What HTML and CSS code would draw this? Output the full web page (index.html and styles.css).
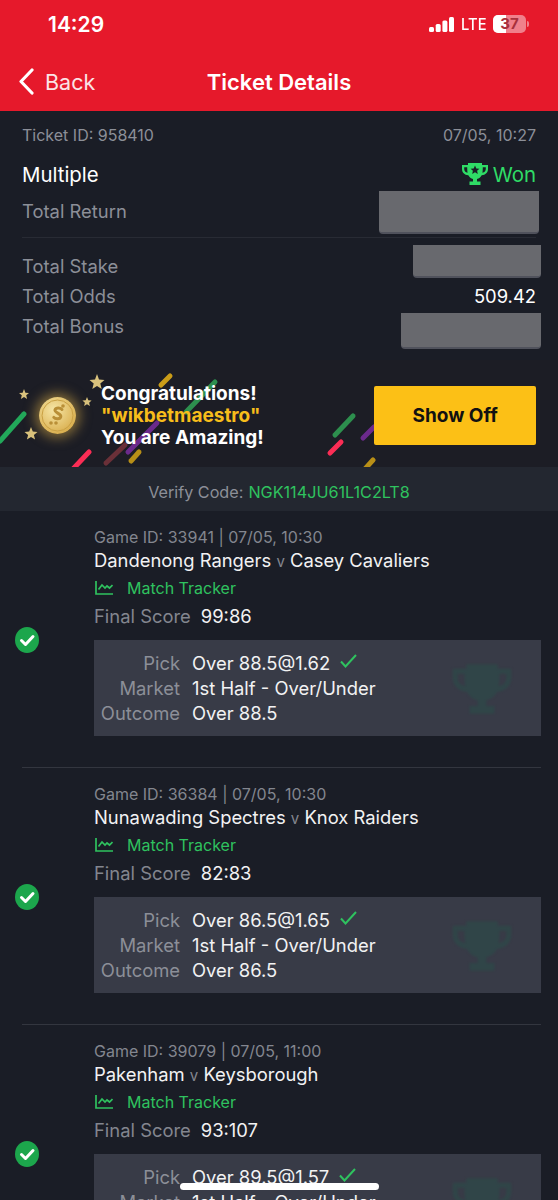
FILE: index.html
```html
<!DOCTYPE html>
<html>

<head>
    <title>Ticket Details</title>
    <link rel="stylesheet" href="styles.css">
</head>

<body>
    <div class="page">
        <div class="top">
            <div class="status">
                <span class="time">14:29</span>
                <div class="status-right">
                    <svg class="signal" width="25" height="15" viewBox="0 0 25 15">
                        <rect x="0" y="10" width="5" height="5" rx="1.5" />
                        <rect x="6.700" y="7" width="5" height="8" rx="1.5" />
                        <rect x="13.400" y="3.500" width="5" height="11.500" rx="1.5" />
                        <rect x="20" y="0" width="5" height="15" rx="1.5" />
                    </svg>
                    <span class="lte">LTE</span>
                    <div class="battery"><span class="battery-fill"></span><span class="battery-num">37</span></div>
                    <span class="battery-tip"></span>
                </div>
            </div>
            <div class="nav">
                <div class="back">
                    <svg width="16" height="27" viewBox="0 0 16 27">
                        <path d="M14 2 L3 13.500 L14 25" fill="none" stroke="#fff" stroke-width="3.200" stroke-linecap="round" stroke-linejoin="round" />
                    </svg>
                    <span>Back</span>
                </div>
                <div class="nav-title">Ticket Details</div>
            </div>
        </div>

        <div class="summary">
            <div class="row row-meta">
                <span>Ticket ID: 958410</span>
                <span>07/05, 10:27</span>
            </div>
            <div class="row row-type">
                <span class="type">Multiple</span>
                <span class="won">
                    <svg width="26" height="24" viewBox="0 0 26 24">
                        <path fill="#2fdc66" d="M6 1h14v2h6v4c0 3.500-2.500 6-6.300 6.300-1 2-2.700 3.300-4.700 3.700v2.500h3.500V23H7.500v-3.500H11V17c-2-.4-3.700-1.700-4.700-3.700C2.500 13 0 10.500 0 7V3h6zM2.200 5.200V7c0 1.900 1.200 3.300 3.400 3.800-.3-1.300-.4-3.500-.4-5.600zm21.600 0h-3c0 2.100-.1 4.300-.4 5.600 2.200-.5 3.400-1.900 3.400-3.800z" />
                        <path fill="#1a1d26" d="M13 3.500l1.300 2.900 3.100.3-2.300 2.100.7 3.100-2.800-1.600-2.800 1.600.7-3.100-2.300-2.100 3.100-.3z" />
                    </svg>
                    Won
                </span>
            </div>
            <div class="row row-total row-return">
                <span>Total Return</span>
                <div class="redact redact-return"></div>
            </div>
            <div class="line"></div>
            <div class="row row-total row-stake">
                <span>Total Stake</span>
                <div class="redact redact-stake"></div>
            </div>
            <div class="row row-total">
                <span>Total Odds</span>
                <span class="odds">509.42</span>
            </div>
            <div class="row row-total">
                <span>Total Bonus</span>
                <div class="redact redact-bonus"></div>
            </div>
        </div>

        <div class="banner">
            <svg class="streaks" width="558" height="107" viewBox="0 0 558 107">
                <g fill="none" stroke-width="5" stroke-linecap="round">
                    <path stroke="#22a85a" d="M24 54 L0 81" />
                    <path stroke="#fb2d55" d="M89 92 L72 110" />
                    <path stroke="#6a3038" d="M125 85 L106 103" />
                    <path stroke="#6b2a8c" d="M157 63 L128 92" />
                    <path stroke="#b88f17" d="M139 92 L131 101" />
                    <path stroke="#c99c18" d="M170 16 L161 25" />
                    <path stroke="#2d8f4e" d="M215 22 L186 52" />
                    <path stroke="#2d8f4e" d="M353 56 L335 75" />
                    <path stroke="#fb2d55" d="M341 82 L330 93" />
                    <path stroke="#6b2a8c" d="M374 67 L363 78" />
                    <path stroke="#b88f17" d="M373 100 L364 110" />
                </g>
                <g fill="#d9c27d">
                    <path d="M97 14l2 5.500 5.500.5-4.200 3.500 1.400 5.600-4.700-3-4.700 3 1.400-5.600-4.200-3.500 5.500-.5z" />
                    <path d="M24 29l1.400 3.700 3.600.3-2.800 2.300.9 3.700-3.100-2-3.100 2 .9-3.700-2.800-2.300 3.600-.3z" />
                    <path d="M87 37l1.300 3.300 3.300.3-2.500 2.100.8 3.300-2.900-1.800-2.900 1.800.8-3.300-2.500-2.100 3.300-.3z" />
                    <path d="M31 67l1.800 4.500 4.700.4-3.600 3 1.200 4.600-4.100-2.500-4.100 2.500 1.200-4.600-3.600-3 4.700-.4z" />
                </g>
            </svg>
            <div class="coin">
                <svg width="37" height="37" viewBox="0 0 37 37">
                    <defs>
                        <radialGradient id="coinFill" cx="40%" cy="35%" r="70%">
                            <stop offset="0" stop-color="#f6e6a6" />
                            <stop offset="1" stop-color="#d8ac4a" />
                        </radialGradient>
                    </defs>
                    <circle cx="18.500" cy="18.500" r="18.500" fill="url(#coinFill)" />
                    <circle cx="18.500" cy="18.500" r="15.500" fill="none" stroke="#c9a043" stroke-width="1" />
                    <path d="M23 12.500c-1-1.800-6-2.500-7 .3-1 3 6.500 3.500 5.800 6.800-.6 2.800-5.500 2.600-7 .8" fill="none" stroke="#b98f37" stroke-width="3" stroke-linecap="round" />
                    <circle cx="24" cy="9" r="1.800" fill="#b98f37" />
                    <circle cx="12" cy="26" r="1.800" fill="#b98f37" />
                    <circle cx="17" cy="26" r="1.800" fill="#b98f37" />
                </svg>
            </div>
            <div class="congrats">
                <div>Congratulations!</div>
                <div class="username">"wikbetmaestro"</div>
                <div>You are Amazing!</div>
            </div>
            <div class="show-off">Show Off</div>
        </div>

        <div class="verify">Verify Code:<span class="code">NGK114JU61L1C2LT8</span></div>

        <div class="game">
            <div class="tick"><svg width="24" height="26" viewBox="0 0 24 26"><path d="M6.500 13.500l4 4 7.500-8" fill="none" stroke="#fff" stroke-width="3" stroke-linecap="round" stroke-linejoin="round" /></svg></div>
            <div class="game-main">
                <div class="game-id">Game ID: 33941 | 07/05, 10:30</div>
                <div class="teams">Dandenong Rangers <span class="vs">v</span> Casey Cavaliers</div>
                <div class="tracker">
                    <svg width="18" height="14" viewBox="0 0 18 14"><path d="M1 0v13h17M3.500 8.500l3.500-4.500 3 3 2-2 2.500 2 3-3" fill="none" stroke="#2fc25f" stroke-width="1.700" /></svg>
                    Match Tracker
                </div>
                <div class="score"><span class="score-label">Final Score</span>99:86</div>
                <div class="pick-box">
                    <div class="pick-row"><span class="pick-label">Pick</span><span>Over 88.5@1.62</span><svg class="pick-tick" width="17" height="14" viewBox="0 0 17 14"><path d="M1 7.500l4.500 5L16 1" fill="none" stroke="#2fc25f" stroke-width="2" /></svg></div>
                    <div class="pick-row"><span class="pick-label">Market</span><span>1st Half - Over/Under</span></div>
                    <div class="pick-row"><span class="pick-label">Outcome</span><span>Over 88.5</span></div>
                    <svg class="ghost" width="60" height="54" viewBox="0 0 26 24"><path d="M6 1h14v2h6v4c0 3.500-2.500 6-6.300 6.300-1 2-2.700 3.300-4.700 3.700v2.500h3.500V23H7.500v-3.500H11V17c-2-.4-3.700-1.700-4.700-3.700C2.500 13 0 10.500 0 7V3h6zM2.200 5.200V7c0 1.900 1.200 3.300 3.400 3.800-.3-1.300-.4-3.500-.4-5.600zm21.600 0h-3c0 2.100-.1 4.300-.4 5.600 2.200-.5 3.400-1.900 3.400-3.800z" /></svg>
                </div>
            </div>
        </div>

        <div class="game">
            <div class="tick"><svg width="24" height="26" viewBox="0 0 24 26"><path d="M6.500 13.500l4 4 7.500-8" fill="none" stroke="#fff" stroke-width="3" stroke-linecap="round" stroke-linejoin="round" /></svg></div>
            <div class="game-main">
                <div class="game-id">Game ID: 36384 | 07/05, 10:30</div>
                <div class="teams">Nunawading Spectres <span class="vs">v</span> Knox Raiders</div>
                <div class="tracker">
                    <svg width="18" height="14" viewBox="0 0 18 14"><path d="M1 0v13h17M3.500 8.500l3.500-4.500 3 3 2-2 2.500 2 3-3" fill="none" stroke="#2fc25f" stroke-width="1.700" /></svg>
                    Match Tracker
                </div>
                <div class="score"><span class="score-label">Final Score</span>82:83</div>
                <div class="pick-box">
                    <div class="pick-row"><span class="pick-label">Pick</span><span>Over 86.5@1.65</span><svg class="pick-tick" width="17" height="14" viewBox="0 0 17 14"><path d="M1 7.500l4.500 5L16 1" fill="none" stroke="#2fc25f" stroke-width="2" /></svg></div>
                    <div class="pick-row"><span class="pick-label">Market</span><span>1st Half - Over/Under</span></div>
                    <div class="pick-row"><span class="pick-label">Outcome</span><span>Over 86.5</span></div>
                    <svg class="ghost" width="60" height="54" viewBox="0 0 26 24"><path d="M6 1h14v2h6v4c0 3.500-2.500 6-6.300 6.300-1 2-2.700 3.300-4.700 3.700v2.500h3.500V23H7.500v-3.500H11V17c-2-.4-3.700-1.700-4.700-3.700C2.500 13 0 10.500 0 7V3h6zM2.200 5.200V7c0 1.900 1.200 3.300 3.400 3.800-.3-1.300-.4-3.500-.4-5.600zm21.600 0h-3c0 2.100-.1 4.300-.4 5.600 2.200-.5 3.400-1.900 3.400-3.800z" /></svg>
                </div>
            </div>
        </div>

        <div class="game">
            <div class="tick"><svg width="24" height="26" viewBox="0 0 24 26"><path d="M6.500 13.500l4 4 7.500-8" fill="none" stroke="#fff" stroke-width="3" stroke-linecap="round" stroke-linejoin="round" /></svg></div>
            <div class="game-main">
                <div class="game-id">Game ID: 39079 | 07/05, 11:00</div>
                <div class="teams">Pakenham <span class="vs">v</span> Keysborough</div>
                <div class="tracker">
                    <svg width="18" height="14" viewBox="0 0 18 14"><path d="M1 0v13h17M3.500 8.500l3.500-4.500 3 3 2-2 2.500 2 3-3" fill="none" stroke="#2fc25f" stroke-width="1.700" /></svg>
                    Match Tracker
                </div>
                <div class="score"><span class="score-label">Final Score</span>93:107</div>
                <div class="pick-box">
                    <div class="pick-row"><span class="pick-label">Pick</span><span>Over 89.5@1.57</span><svg class="pick-tick" width="17" height="14" viewBox="0 0 17 14"><path d="M1 7.500l4.500 5L16 1" fill="none" stroke="#2fc25f" stroke-width="2" /></svg></div>
                    <div class="pick-row"><span class="pick-label">Market</span><span>1st Half - Over/Under</span></div>
                    <div class="pick-row"><span class="pick-label">Outcome</span><span>Over 89.5</span></div>
                    <svg class="ghost" width="60" height="54" viewBox="0 0 26 24"><path d="M6 1h14v2h6v4c0 3.500-2.500 6-6.300 6.300-1 2-2.700 3.300-4.700 3.700v2.500h3.500V23H7.500v-3.500H11V17c-2-.4-3.700-1.700-4.700-3.700C2.500 13 0 10.500 0 7V3h6zM2.200 5.200V7c0 1.900 1.200 3.300 3.400 3.800-.3-1.300-.4-3.500-.4-5.600zm21.600 0h-3c0 2.100-.1 4.300-.4 5.600 2.200-.5 3.400-1.900 3.400-3.800z" /></svg>
                </div>
            </div>
        </div>

        <div class="home-bar"></div>
    </div>
</body>

</html>
```

FILE: styles.css
```css
* {
    margin: 0;
    padding: 0;
    box-sizing: border-box;
}

body {
    background-color: #1a1d26;
    font-family: Inter, "Liberation Sans", sans-serif;
    overflow: hidden;
}

.page {
    width: 558px;
    height: 1200px;
    position: relative;
    overflow: hidden;
    background-color: #1a1d26;
}

.top {
    height: 111px;
    background-color: #e6192b;
    color: #fff;
}

.status {
    height: 48px;
    padding: 0 29px 0 48px;
    display: flex;
    justify-content: space-between;
    align-items: center;
}

.time {
    font-size: 21px;
    font-weight: 600;
}

.status-right {
    display: flex;
    align-items: center;
}

.signal {
    fill: #fff;
}

.lte {
    font-size: 16px;
    font-weight: 500;
    margin-left: 6px;
    transform: scaleX(0.92);
}

.battery {
    width: 33px;
    height: 18px;
    margin-left: 5px;
    border-radius: 5px;
    background-color: #f0808b;
    position: relative;
    overflow: hidden;
}

.battery-fill {
    display: block;
    width: 13px;
    height: 18px;
    background-color: #fff;
}

.battery-num {
    position: absolute;
    top: 0;
    left: 0;
    width: 33px;
    line-height: 18px;
    text-align: center;
    font-size: 15px;
    font-weight: 700;
    color: #a8303c;
}

.battery-tip {
    width: 2px;
    height: 6px;
    margin-left: 1px;
    border-radius: 0 2px 2px 0;
    background-color: #f0808b;
}

.nav {
    height: 63px;
    padding-top: 5px;
    position: relative;
    display: flex;
    align-items: center;
    justify-content: center;
}

.back {
    position: absolute;
    left: 18px;
    top: 20px;
    display: flex;
    align-items: center;
    gap: 11px;
    font-size: 21.500px;
    font-weight: 400;
    color: #fbe3e5;
}

.nav-title {
    font-size: 22px;
    font-weight: 600;
}

.summary {
    height: 249px;
    padding: 13px 22px 0;
}

.row {
    display: flex;
    justify-content: space-between;
    align-items: center;
}

.row-meta {
    height: 22px;
    font-size: 16px;
    color: #8c8f98;
}

.row-type {
    height: 34px;
    margin-top: 11px;
}

.type {
    font-size: 20.400px;
    color: #fff;
}

.won {
    display: flex;
    align-items: center;
    gap: 5px;
    font-size: 20.400px;
    color: #2fdc66;
}

.row-total {
    height: 30px;
    font-size: 18.400px;
    color: #8c8f98;
    position: relative;
}

.row-return {
    margin-top: 5px;
}

.row-stake {
    margin-top: 13px;
}

.line {
    height: 1px;
    margin-top: 11px;
    background-color: #282b34;
}

.odds {
    color: #fff;
}

.redact {
    position: absolute;
    background-color: #68696e;
    border-bottom: 2px solid #50525c;
    border-radius: 0 0 4px 4px;
}

.redact-return {
    left: 357px;
    top: -5px;
    width: 160px;
    height: 43px;
}

.redact-stake {
    left: 391px;
    top: -6px;
    width: 128px;
    height: 33px;
}

.redact-bonus {
    left: 379px;
    top: 2px;
    width: 140px;
    height: 36px;
}

.banner {
    height: 107px;
    padding: 26px 22px 0 36px;
    background-color: #1c1d25;
    display: flex;
    position: relative;
    overflow: hidden;
}

.streaks {
    position: absolute;
    top: 0;
    left: 0;
}

.coin {
    width: 37px;
    height: 37px;
    margin-top: 11px;
    margin-left: 3px;
    border-radius: 50%;
    box-shadow: 0 0 12px 4px rgba(214, 170, 70, 0.55);
    position: relative;
}

.congrats {
    width: 274px;
    margin-left: 25px;
    margin-top: -3px;
    font-size: 19px;
    font-weight: 700;
    line-height: 22px;
    color: #fff;
    position: relative;
}

.username {
    color: #f7bd1b;
}

.show-off {
    width: 162px;
    height: 59px;
    border-radius: 2px;
    background-color: #fcc016;
    color: #111;
    text-align: center;
    line-height: 59px;
    font-size: 19px;
    font-weight: 700;
    position: relative;
}

.verify {
    height: 44px;
    background-color: #232730;
    display: flex;
    justify-content: center;
    align-items: center;
    padding-top: 5px;
    font-size: 16.200px;
    color: #8c8f98;
}

.code {
    margin-left: 5px;
    color: #2fc25f;
}

.game {
    height: 257px;
    margin: 0 17px 0 22px;
    padding-top: 15px;
    border-bottom: 1px solid #33363f;
    display: flex;
    position: relative;
}

.game:last-of-type {
    border-bottom: 0;
}

.tick {
    position: absolute;
    left: -7px;
    top: 116px;
    width: 24px;
    height: 26px;
    border-radius: 50%;
    background-color: #1ca64c;
}

.game-main {
    margin-left: 72px;
    width: 448px;
}

.game-id {
    height: 22px;
    line-height: 22px;
    font-size: 16px;
    color: #83868f;
}

.teams {
    height: 24px;
    line-height: 24px;
    font-size: 18.400px;
    color: #f2f2f3;
}

.vs {
    font-size: 15px;
    color: #83868f;
}

.tracker {
    height: 32px;
    display: flex;
    align-items: center;
    gap: 14px;
    font-size: 16px;
    color: #2fc25f;
}

.tracker svg {
    margin-left: 1px;
}

.score {
    height: 24px;
    line-height: 24px;
    font-size: 18.400px;
    color: #f2f2f3;
}

.score-label {
    margin-right: 10px;
    color: #83868f;
}

.pick-box {
    height: 96px;
    margin-top: 12px;
    padding-top: 10px;
    background-color: #383b47;
    position: relative;
}

.pick-row {
    height: 25px;
    display: flex;
    align-items: center;
    font-size: 18.400px;
    color: #f2f2f3;
}

.pick-label {
    width: 86px;
    margin-right: 12px;
    text-align: right;
    color: #8c8f98;
}

.pick-tick {
    margin-left: 10px;
    margin-top: -4px;
}

.ghost {
    position: absolute;
    top: 22px;
    left: 358px;
    fill: #304548;
    filter: blur(1px);
}

.home-bar {
    position: absolute;
    left: 180px;
    top: 1183px;
    width: 199px;
    height: 7px;
    border-radius: 4px;
    background-color: #fff;
}
```
